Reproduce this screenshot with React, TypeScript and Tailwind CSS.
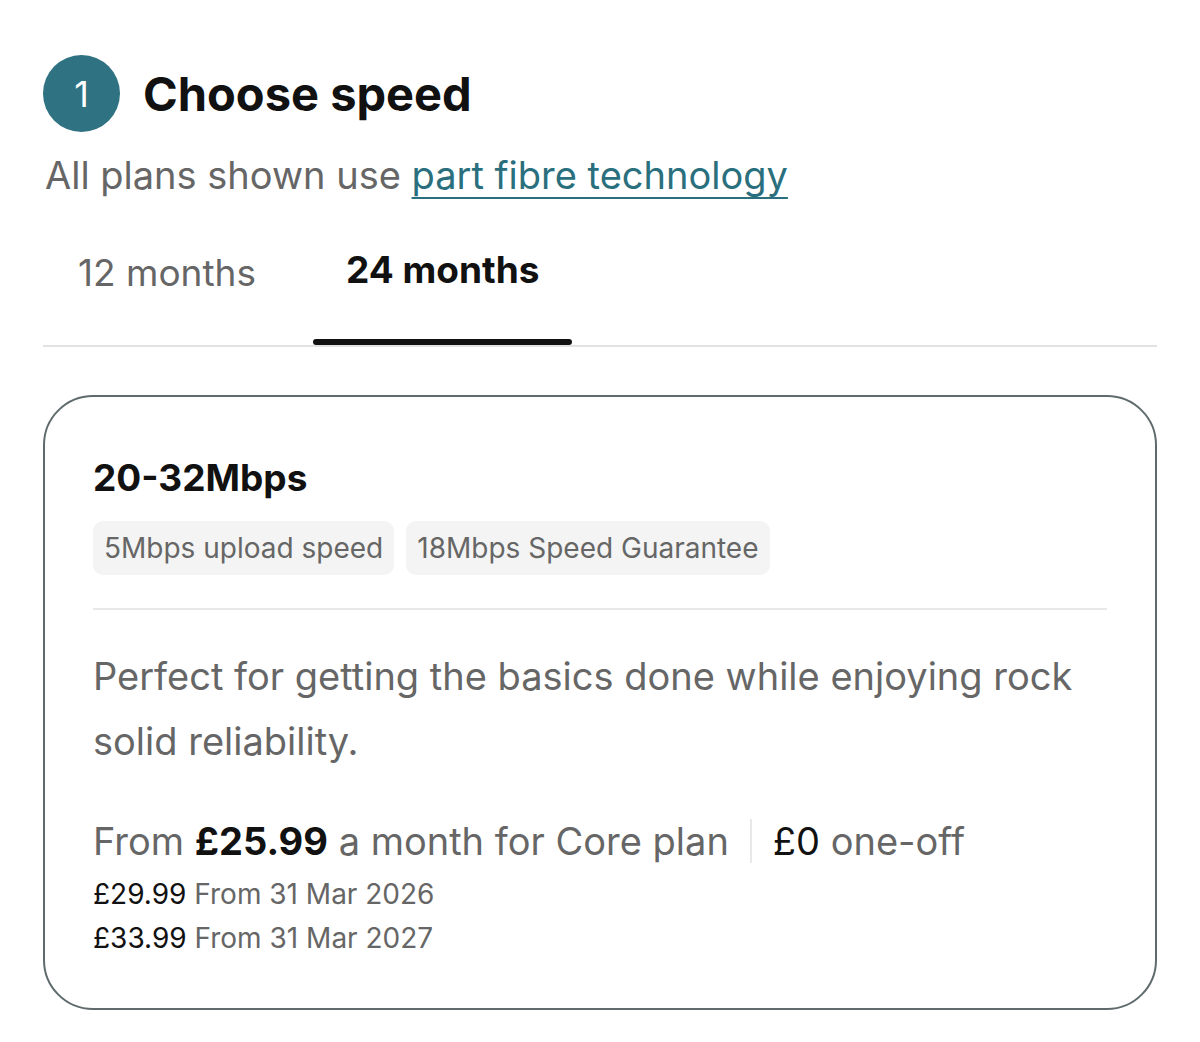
import React from "react";

const font = { fontFamily: "Inter, 'Noto Sans', sans-serif" };

const Chip = ({ children }: { children: React.ReactNode }) => (
  <span className="rounded-[10px] bg-[#f4f4f4] px-[11px] py-[9px] text-[28px] leading-[36px] text-[#666]">
    {children}
  </span>
);

export default function App() {
  return (
    <div className="min-h-[1042px] w-[1200px] bg-white pt-[55px]" style={font}>
      <div className="px-[43px]">
        <div className="flex items-center gap-[23px]">
          <div className="flex h-[77px] w-[77px] items-center justify-center rounded-full bg-[#2f7282] text-[36px] text-white">
            1
          </div>
          <h1 className="text-[47px] font-bold leading-[60px] text-[#111]">Choose speed</h1>
        </div>
        <p className="mt-[20px] pl-[2px] text-[38px] leading-[46px] text-[#666]">
          All plans shown use{" "}
          <a className="text-[#2a6f7d] underline decoration-2 underline-offset-[8px]">
            part fibre technology
          </a>
        </p>

        <div className="mt-[51px] flex border-b-2 border-[#e2e2e2]">
          <div className="px-[35px] pb-[48px] text-[37px] leading-[48px] text-[#666]">12 months</div>
          <div className="relative ml-[22px] px-[33px] pb-[54px] text-[37px] font-bold leading-[42px] text-[#111]">
            24 months
            <span className="absolute bottom-0 left-0 right-0 h-[6px] rounded-full bg-[#111]" />
          </div>
        </div>

        <div className="mt-[48px] rounded-[50px] border-2 border-[#5f6b6d] px-[48px] pb-[48px] pt-[58px]">
          <h2 className="text-[37px] font-bold leading-[46px] text-[#111]">20-32Mbps</h2>
          <div className="mt-[20px] flex gap-[12px]">
            <Chip>5Mbps upload speed</Chip>
            <Chip>18Mbps Speed Guarantee</Chip>
          </div>
          <div className="mt-[33px] h-[2px] bg-[#e8e8e8]" />
          <p className="mt-[34px] text-[38px] leading-[65px] text-[#666]">
            Perfect for getting the basics done while enjoying rock solid reliability.
          </p>
          <div className="mt-[44px] flex items-center text-[38px] leading-[46px] text-[#666]">
            <span>
              From <b className="font-bold text-[#111]">£25.99</b> a month for Core plan
            </span>
            <span className="mx-[21px] h-[44px] w-[2px] bg-[#e8e8e8]" />
            <span>
              <span className="text-[#111]">£0</span> one-off
            </span>
          </div>
          <div className="mt-[8px] text-[28px] leading-[44px] text-[#666]">
            <div>
              <span className="text-[#111]">£29.99</span> From 31 Mar 2026
            </div>
            <div>
              <span className="text-[#111]">£33.99</span> From 31 Mar 2027
            </div>
          </div>
        </div>
      </div>
    </div>
  );
}
